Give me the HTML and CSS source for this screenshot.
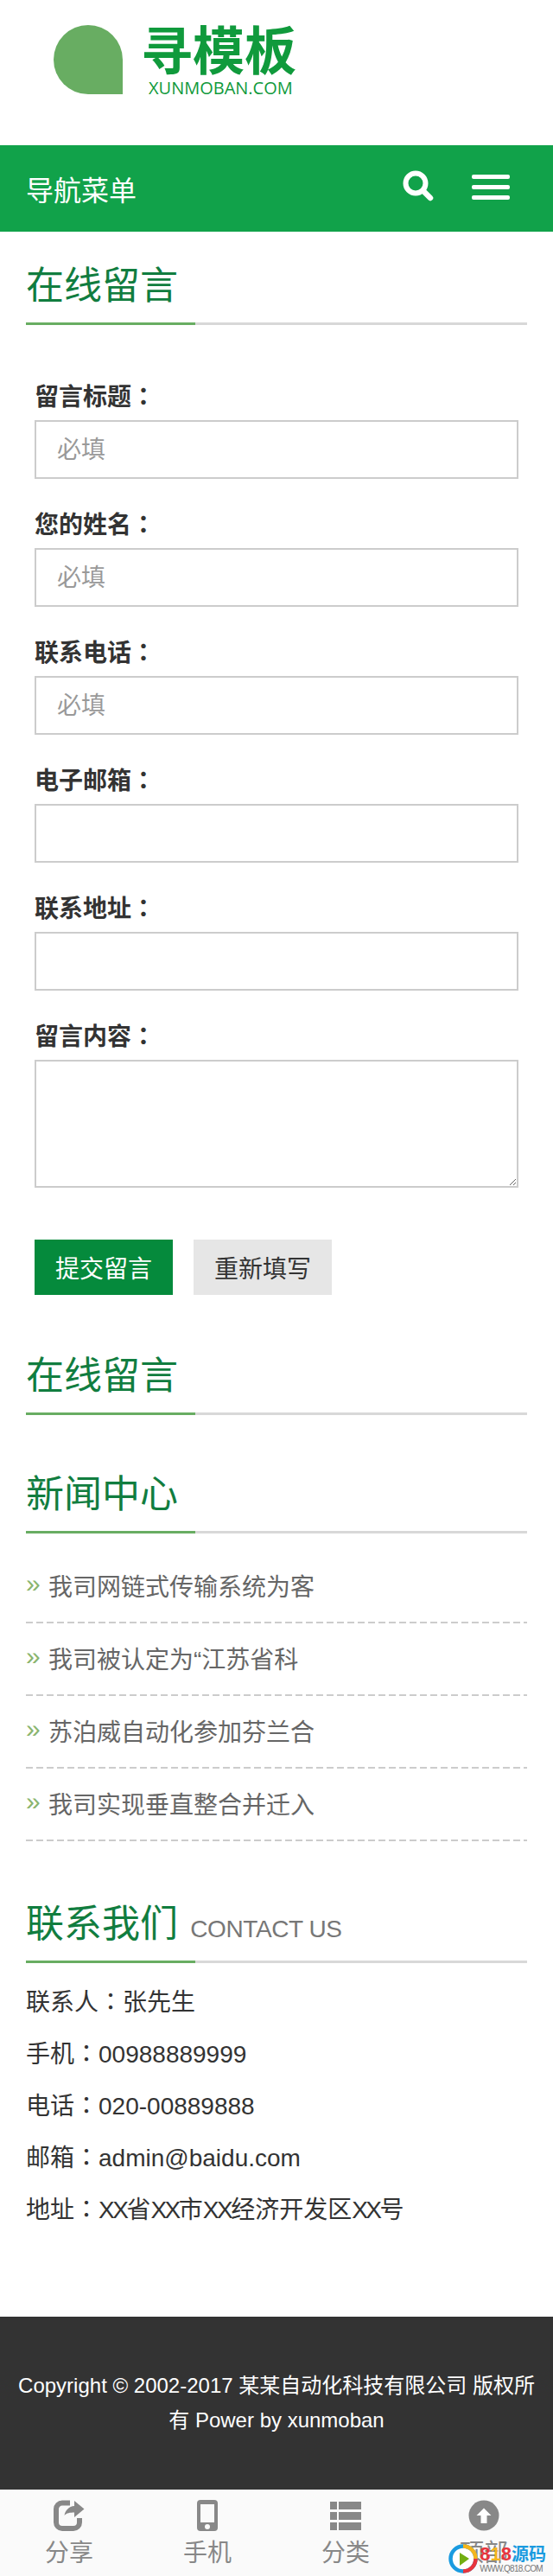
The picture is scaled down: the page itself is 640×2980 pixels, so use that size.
FILE: index.html
```html
<!DOCTYPE html>
<html lang="zh-CN">
  <head>
    <meta charset="UTF-8" />
    <meta name="viewport" content="width=device-width, initial-scale=1.0" />
    <title>在线留言</title>
    <link rel="stylesheet" href="styles.css">
  </head>
  <body>
    <header class="site-header">
      <div class="logo-mark"></div>
      <div class="logo-text">
        <div class="logo-name">寻模板</div>
        <div class="logo-url">XUNMOBAN.COM</div>
      </div>
    </header>

    <nav class="nav-bar">
      <div class="nav-title">导航菜单</div>
      <svg class="search-icon" viewBox="0 0 36 36" width="36" height="36">
        <circle cx="15" cy="15" r="11.5" fill="none" stroke="#fff" stroke-width="6" />
        <path d="M24 24 L32 32" stroke="#fff" stroke-width="6.5" stroke-linecap="round" />
      </svg>
      <div class="menu-icon"><span></span><span></span><span></span></div>
    </nav>

    <h2 class="section-title section-first">在线留言</h2>

    <form class="message-form">
      <label class="field-label">留言标题<span class="colon" lang="zh-TW">：</span></label>
      <input class="field-input" type="text" placeholder="必填" />
      <label class="field-label">您的姓名<span class="colon" lang="zh-TW">：</span></label>
      <input class="field-input" type="text" placeholder="必填" />
      <label class="field-label">联系电话<span class="colon" lang="zh-TW">：</span></label>
      <input class="field-input" type="text" placeholder="必填" />
      <label class="field-label">电子邮箱<span class="colon" lang="zh-TW">：</span></label>
      <input class="field-input" type="text" />
      <label class="field-label">联系地址<span class="colon" lang="zh-TW">：</span></label>
      <input class="field-input" type="text" />
      <label class="field-label">留言内容<span class="colon" lang="zh-TW">：</span></label>
      <textarea class="field-input field-area"></textarea>
      <div class="form-buttons">
        <button class="btn btn-submit" type="button">提交留言</button>
        <button class="btn btn-reset" type="button">重新填写</button>
      </div>
    </form>

    <h2 class="section-title section-second">在线留言</h2>

    <h2 class="section-title section-news">新闻中心</h2>
    <ul class="news-list">
      <li>我司网链式传输系统为客</li>
      <li>我司被认定为“江苏省科</li>
      <li>苏泊威自动化参加芬兰合</li>
      <li>我司实现垂直整合并迁入</li>
    </ul>

    <h2 class="section-title section-contact">联系我们 <small>CONTACT US</small></h2>
    <div class="contact-info">
      <p>联系人<span class="colon" lang="zh-TW">：</span>张先生</p>
      <p>手机<span class="colon" lang="zh-TW">：</span>00988889999</p>
      <p>电话<span class="colon" lang="zh-TW">：</span>020-00889888</p>
      <p>邮箱<span class="colon" lang="zh-TW">：</span>admin@baidu.com</p>
      <p>地址<span class="colon" lang="zh-TW">：</span><span class="tight">XX</span>省<span class="tight">XX</span>市<span class="tight">XX</span>经济开发区<span class="tight">XX</span>号</p>
    </div>

    <footer class="site-footer">
      Copyright © 2002-2017 某某自动化科技有限公司 版权所有 Power by xunmoban
    </footer>

    <div class="bottom-bar">
      <a class="bar-item">
        <svg viewBox="0 0 36 36" width="36" height="36">
          <path d="M19 3.5 H10 a7 7 0 0 0 -7 7 V26 a7 7 0 0 0 7 7 H23 a7 7 0 0 0 7 -7 V21" fill="none" stroke="#888" stroke-width="6" />
          <path d="M24 1 L35.500 10.500 L24 20 V14.500 C19 14.500 15 15 12.500 18 C13.500 12 18 7.500 24 7 Z" fill="#888" />
        </svg>
        <span>分享</span>
      </a>
      <a class="bar-item">
        <svg viewBox="0 0 24 36" width="24" height="36">
          <rect width="24" height="36" rx="4" fill="#888" />
          <rect x="4" y="5" width="16" height="21" fill="#fafafa" />
          <circle cx="12" cy="31" r="3" fill="#fafafa" />
        </svg>
        <span>手机</span>
      </a>
      <a class="bar-item">
        <svg viewBox="0 0 36 36" width="36" height="36">
          <path d="M0 2 H8 V11 H0 Z M10 2 H36 V11 H10 Z M0 14 H8 V23 H0 Z M10 14 H36 V23 H10 Z M0 26 H8 V35 H0 Z M10 26 H36 V35 H10 Z" fill="#888" />
        </svg>
        <span>分类</span>
      </a>
      <a class="bar-item">
        <svg viewBox="0 0 36 36" width="36" height="36">
          <circle cx="18" cy="18" r="17.500" fill="#888" />
          <path d="M18 9.500 L26.500 18 H21.500 V27 H14.500 V18 H9.500 Z" fill="#fff" />
        </svg>
        <span>顶部</span>
      </a>

      <div class="watermark">
        <svg viewBox="0 0 34 34" width="34" height="34">
          <circle cx="17" cy="17" r="14.500" fill="#fff" stroke="#1a9be0" stroke-width="4.500" />
          <path d="M17 2.500 A14.500 14.500 0 0 1 31.500 17" fill="none" stroke="#f5b51c" stroke-width="4.500" />
          <path d="M31.500 17 A14.500 14.500 0 0 1 17 31.500" fill="none" stroke="#e8343c" stroke-width="4.500" />
          <path d="M13 10 L24 17 L13 25 Z" fill="#72ae12" />
        </svg>
        <div class="watermark-text">
          <div class="watermark-name"><b>8<i>1</i>8</b><em>源码</em></div>
          <div class="watermark-url">WWW.Q818.COM</div>
        </div>
      </div>
    </div>
  </body>
</html>
```

FILE: styles.css
```css
* {
  margin: 0;
  padding: 0;
  box-sizing: border-box;
}

body {
  margin: 0;
  width: 640px;
  font-family: "Liberation Sans", "Noto Sans CJK SC", sans-serif;
  font-size: 28px;
  color: #333;
  background-color: #fff;
}

.colon {
  font-family: "Noto Sans CJK TC", sans-serif;
  line-height: 1;
}

.tight {
  letter-spacing: -2.5px;
}

/* header */
.site-header {
  height: 168px;
  padding: 29px 0 0 62px;
  display: flex;
  align-items: flex-start;
}

.logo-mark {
  width: 80px;
  height: 80px;
  background-color: #68ad62;
  border-radius: 50% 50% 0 50%;
}

.logo-text {
  margin-left: 21px;
  color: #109a3c;
}

.logo-name {
  margin-top: 3px;
  font-size: 60px;
  font-weight: 700;
  line-height: 58px;
}

.logo-url {
  margin-left: 9px;
  font-family: "Open Sans", sans-serif;
  font-size: 20px;
  line-height: 24px;
}

.nav-bar {
  height: 100px;
  padding: 0 50px 0 30px;
  display: flex;
  align-items: center;
  background-color: #11a24a;
  color: #fff;
}

.nav-title {
  flex: 1;
  font-size: 32px;
}

.search-icon {
  margin: -6px 44px 0 0;
}

.menu-icon {
  width: 44px;
  height: 29px;
  margin-top: -3px;
  display: flex;
  flex-direction: column;
  justify-content: space-between;
}

.menu-icon span {
  height: 5px;
  background-color: #fff;
  border-radius: 2px;
}

/* section titles */
.section-title {
  margin: 0 30px;
  font-size: 44px;
  font-weight: 400;
  line-height: 60px;
  color: #117d3f;
}

.section-title::after {
  content: "";
  display: block;
  height: 3px;
  margin-top: 12px;
  background: linear-gradient(to right, #68ad62 196px, #d8d8d8 196px);
}

.section-title small {
  margin-left: 2px;
  font-size: 28px;
  line-height: 1;
  letter-spacing: -0.4px;
  color: #777;
}

.section-first {
  padding-top: 33px;
}

.section-second {
  margin-top: 64px;
}

.section-news {
  margin-top: 62px;
}

.section-contact {
  margin-top: 66px;
}

/* form */
.message-form {
  padding: 60px 40px 0;
}

.field-label {
  display: block;
  height: 40px;
  margin-bottom: 10px;
  padding-top: 7px;
  font-size: 28px;
  font-weight: 700;
  line-height: 33px;
}

.field-input {
  display: block;
  width: 100%;
  height: 68px;
  margin-bottom: 30px;
  padding: 2px 24px 0;
  border: 2px solid #ccc;
  background-color: #fff;
  font-family: inherit;
  font-size: 28px;
  color: #333;
  outline: none;
}

.field-input::placeholder {
  color: #999;
}

.field-area {
  height: 148px;
  margin-bottom: 60px;
}

.form-buttons {
  display: flex;
  gap: 24px;
}

.btn {
  width: 160px;
  height: 64px;
  border: none;
  font-family: inherit;
  font-size: 28px;
}

.btn-submit {
  background-color: #058a3c;
  color: #fff;
}

.btn-reset {
  background-color: #e6e6e6;
  color: #333;
}

/* news */
.news-list {
  margin: 20px 30px 0;
  list-style: none;
}

.news-list li {
  height: 84px;
  padding-bottom: 4px;
  display: flex;
  align-items: center;
  background: repeating-linear-gradient(to right, #ccc 0 8px, transparent 8px 12px) bottom / 100% 2px no-repeat;
  font-size: 28px;
  color: #666;
}

.news-list li::before {
  content: "»";
  width: 26px;
  margin-top: -4px;
  font-size: 30px;
  color: #8ab56e;
}

/* contact */
.contact-info {
  margin: 16px 30px 0;
}

.contact-info p {
  line-height: 60px;
}

/* footer */
.site-footer {
  margin-top: 93px;
  padding: 60px 10px;
  background-color: #333;
  font-size: 24px;
  line-height: 40px;
  color: #fff;
  text-align: center;
}

.bottom-bar {
  position: relative;
  height: 100px;
  display: grid;
  grid-template-columns: repeat(4, 1fr);
  background-color: #fafafa;
}

.bar-item {
  padding-top: 12px;
  display: flex;
  flex-direction: column;
  align-items: center;
  gap: 6px;
  color: #888;
  line-height: 40px;
}

/* site stamp over the last tab */
.watermark {
  position: absolute;
  right: 8px;
  bottom: 3px;
  display: flex;
  align-items: center;
  gap: 2px;
}

.watermark-name {
  display: flex;
  font-size: 22px;
  font-weight: 700;
  line-height: 24px;
}

.watermark-name b {
  color: #e8343c;
}

.watermark-name i {
  font-style: normal;
  color: #f5b51c;
}

.watermark-name em {
  font-size: 20px;
  font-style: normal;
  color: #1a9be0;
}

.watermark-url {
  font-size: 10px;
  letter-spacing: -0.7px;
  line-height: 10px;
  color: #777;
}
```
